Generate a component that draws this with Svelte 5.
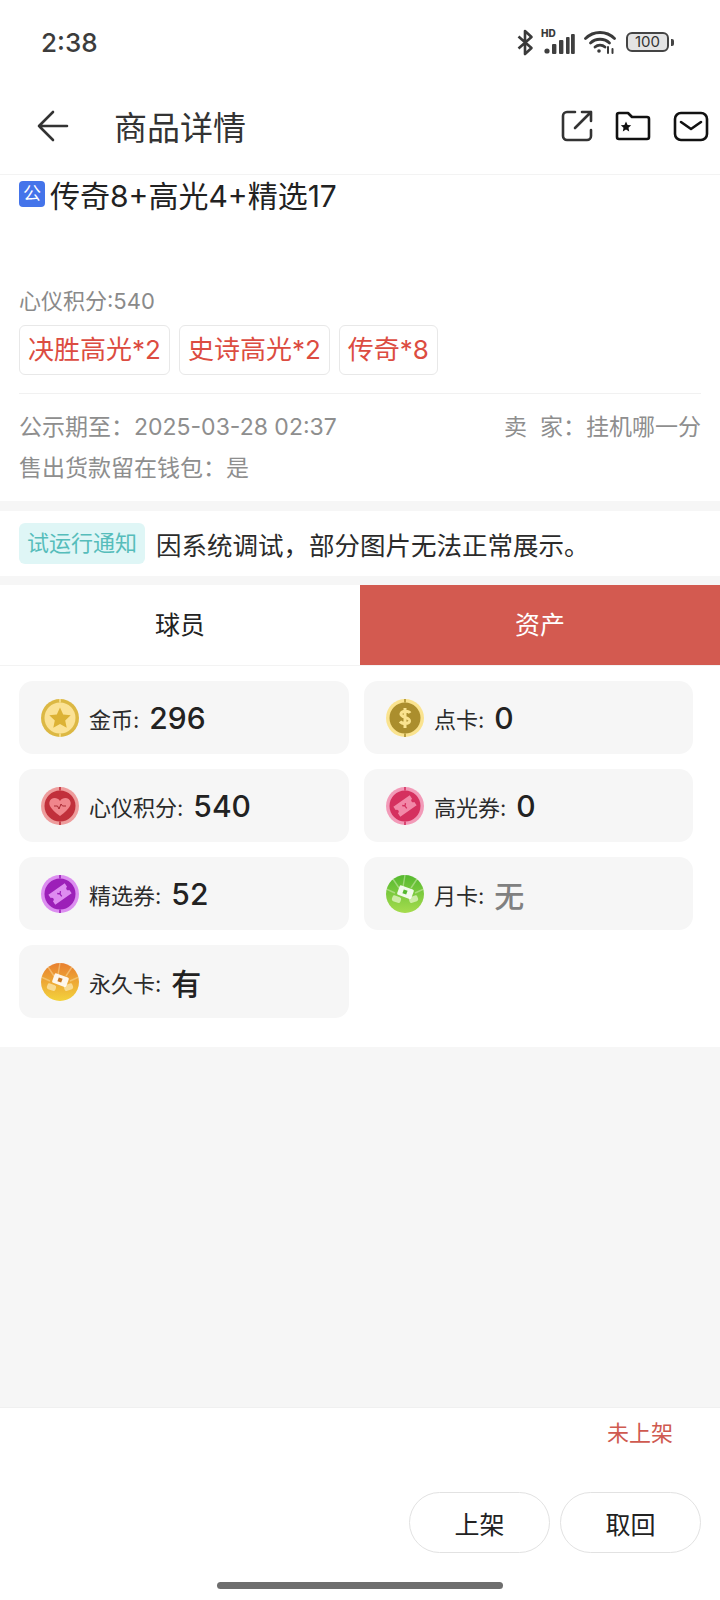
<script lang="ts">
  const tags = ['决胜高光*2', '史诗高光*2', '传奇*8'];

  const assets = [
    { kind: 'gold', label: '金币', value: '296' },
    { kind: 'point', label: '点卡', value: '0' },
    { kind: 'heart', label: '心仪积分', value: '540' },
    { kind: 'highlight', label: '高光券', value: '0' },
    { kind: 'select', label: '精选券', value: '52' },
    { kind: 'month', label: '月卡', value: '无', muted: true },
    { kind: 'forever', label: '永久卡', value: '有' }
  ];

  const rings = {
    gold: { outer: '#dcb843', inner: '#fbe295', tick: '#fbe295' },
    point: { outer: '#fae38f', inner: '#ab8e2d', tick: '#ab8e2d' },
    heart: { outer: '#ee9c9c', inner: '#c1303b', tick: '#c1303b' },
    highlight: { outer: '#f29ab8', inner: '#d5305f', tick: '#d5305f' },
    select: { outer: '#dc8df0', inner: '#9c1fb8', tick: '#9c1fb8' }
  };
</script>

{#snippet ticket(fill: string, dark: string)}
  <g transform="rotate(-35 19 19)">
    <path d="M9 13h20v4a2 2 0 0 0 0 4v4H9v-4a2 2 0 0 0 0-4z" fill={fill} />
    <path d="M17 17l2 2 2-2M19 19v3" fill="none" stroke={dark} stroke-width="1.3" />
  </g>
{/snippet}

{#snippet cards(id: string, top: string, bottom: string, light: string, dark: string)}
  <defs>
    <linearGradient id={id} x1="0" y1="0" x2="0" y2="1">
      <stop offset="0" stop-color={top} />
      <stop offset="1" stop-color={bottom} />
    </linearGradient>
  </defs>
  <circle cx="19" cy="19" r="19" fill="url(#{id})" />
  <g fill="none" stroke={light} stroke-opacity=".45" stroke-width="1.4">
    <path d="M19 0l-2 12M7 4l6 9M31 4l-6 9M0 14l9 4M38 14l-9 4" />
  </g>
  <g fill={light} fill-opacity=".75">
    <rect x="6" y="21" width="9" height="6" rx="2" transform="rotate(20 10 24)" />
    <rect x="23" y="21" width="9" height="6" rx="2" transform="rotate(-20 28 24)" />
  </g>
  <rect x="12" y="12" width="15" height="10" rx="1.5" transform="rotate(20 19 17)" fill="#fff" fill-opacity=".9" />
  <rect x="17" y="15" width="4" height="4" transform="rotate(20 19 17)" fill={dark} />
{/snippet}

<div class="page">
  <div class="status">
    <span class="time">2:38</span>
    <div class="status-icons">
      <svg class="bt" width="17" height="27" viewBox="0 0 17 27" fill="none" stroke="#3a3a3a" stroke-width="2.6">
        <path d="M1.5 7.5l13 11.5-6.5 6V2l6.5 6-13 11.5" stroke-linejoin="round" />
      </svg>
      <div class="signal">
        <span class="hd">HD</span>
        <svg width="31" height="20" viewBox="0 0 31 20" fill="#3f3f3f">
          <circle cx="3" cy="17" r="2.6" />
          <rect x="8" y="10" width="4.4" height="10" rx="1" />
          <rect x="15" y="6" width="4.4" height="14" rx="1" />
          <rect x="22" y="3" width="3.6" height="17" rx="1" />
          <rect x="27" y="0" width="3.8" height="20" rx="1" />
        </svg>
      </div>
      <svg class="wifi" width="32" height="24" viewBox="0 0 32 24" fill="none" stroke="#3a3a3a" stroke-width="2.8" stroke-linecap="round">
        <path d="M1.5 8.5C9.5 .5 22.5 .5 30.5 8.5" />
        <path d="M6.5 13C11.5 8 20.5 8 25.5 13" />
        <path d="M11 17c2.8-2.6 7.2-2.6 10 0" />
        <circle cx="15" cy="21" r="1.8" fill="#3a3a3a" stroke="none" />
        <path d="M24 17v6M28.5 19v4" stroke-width="2" />
      </svg>
      <div class="battery">
        <div class="cell">100</div>
        <div class="nub"></div>
      </div>
    </div>
  </div>

  <header class="bar">
    <svg class="back" width="32" height="32" viewBox="0 0 32 32" fill="none" stroke="#333" stroke-width="2.6" stroke-linecap="round" stroke-linejoin="round">
      <path d="M16 2L2 16l14 14M2 16h28" />
    </svg>
    <h1>商品详情</h1>
    <div class="actions">
      <svg width="32" height="32" viewBox="0 0 32 32" fill="none" stroke="#333" stroke-width="2.6" stroke-linecap="round" stroke-linejoin="round">
        <path d="M30 20v6a4 4 0 0 1-4 4H6a4 4 0 0 1-4-4V6a4 4 0 0 1 4-4h8" />
        <path d="M21 2h9v9M30 2L14 18" />
      </svg>
      <svg class="folder" width="36" height="30" viewBox="0 0 36 30" fill="none" stroke="#111" stroke-width="2.6" stroke-linejoin="round">
        <path d="M2 4a2 2 0 0 1 2-2h9l4 4h15a2 2 0 0 1 2 2v18a2 2 0 0 1-2 2H4a2 2 0 0 1-2-2z" />
        <path d="M11 10.5l1.6 3.4 3.6.4-2.7 2.5.7 3.6-3.2-1.8-3.2 1.8.7-3.6-2.7-2.5 3.6-.4z" fill="#111" stroke="none" />
      </svg>
      <svg class="mail" width="36" height="31" viewBox="0 0 36 31" fill="none" stroke="#111" stroke-width="2.6" stroke-linecap="round" stroke-linejoin="round">
        <rect x="2" y="2" width="32" height="27" rx="6" />
        <path d="M8 11l10 7 10-7" />
      </svg>
    </div>
  </header>

  <section class="info">
    <div class="title">
      <span class="badge">公</span>
      <span>传奇8+高光4+精选17</span>
    </div>
    <div class="score">心仪积分:540</div>
    <div class="tags">
      {#each tags as tag}
        <span class="tag">{tag}</span>
      {/each}
    </div>
    <div class="meta">
      <div class="meta-row">
        <span>公示期至：2025-03-28 02:37</span>
        <span>卖&nbsp;&nbsp;家：挂机哪一分</span>
      </div>
      <div class="meta-row">
        <span>售出货款留在钱包：是</span>
      </div>
    </div>
  </section>

  <section class="notice">
    <span class="notice-tag">试运行通知</span>
    <span class="notice-text">因系统调试，部分图片无法正常展示。</span>
  </section>

  <nav class="tabs">
    <div class="tab">球员</div>
    <div class="tab active">资产</div>
  </nav>

  <section class="assets">
    {#each assets as item}
      <div class="card">
        <svg class="coin" width="38" height="38" viewBox="0 0 38 38">
          {#if rings[item.kind]}
            <circle cx="19" cy="19" r="19" fill={rings[item.kind].outer} />
            <circle cx="19" cy="19" r="15.5" fill={rings[item.kind].inner} />
            <path d="M19 0v3.5M19 34.5V38" stroke={rings[item.kind].tick} stroke-width="1.6" />
          {/if}
          {#if item.kind === 'gold'}
            <path d="M19 8.5l3.2 6.9 7.5.9-5.5 5.1 1.5 7.4-6.7-3.7-6.7 3.7 1.5-7.4-5.5-5.1 7.5-.9z" fill="#dcb235" />
          {:else if item.kind === 'point'}
            <path d="M24 14c-1-2-8-3-9 .6-1 4.200 9 3.200 8.500 7.400-.5 3.500-7.500 3-9.500.5M19 9v20" fill="none" stroke="#fae38f" stroke-width="3" />
          {:else if item.kind === 'heart'}
            <path d="M19 29C8 21 8 17 8.500 15c1-4.500 7.500-5.500 10.500-1 3-4.500 9.500-3.500 10.500 1C30 17 30 21 19 29z" fill="#f0868c" />
            <path d="M13 19h3.500l1.500 3 2-5 1.500 2h3.500" fill="none" stroke="#a82a33" stroke-width="1" />
          {:else if item.kind === 'highlight'}
            {@render ticket('#f288a8', '#d5305f')}
          {:else if item.kind === 'select'}
            {@render ticket('#de8cf0', '#9c1fb8')}
          {:else if item.kind === 'month'}
            {@render cards('monthFill', '#55b92f', '#a6dc4e', '#e4f5c8', '#55b92f')}
          {:else if item.kind === 'forever'}
            {@render cards('foreverFill', '#e87f2f', '#f3d23c', '#fbe7b0', '#c9771f')}
          {/if}
        </svg>
        <span class="label">{item.label}:</span>
        <span class="value" class:muted={item.muted}>{item.value}</span>
      </div>
    {/each}
  </section>

  <div class="filler"></div>

  <footer class="foot">
    <div class="shelf">未上架</div>
    <div class="buttons">
      <button>上架</button>
      <button>取回</button>
    </div>
    <div class="home"></div>
  </footer>
</div>

<style>
  :global(body) {
    margin: 0;
    background: #fff;
  }

  .page {
    width: 720px;
    height: 1600px;
    display: flex;
    flex-direction: column;
    font-family: Inter, "Noto Sans CJK SC", sans-serif;
    color: #222;
    background: #fff;
    overflow: hidden;
  }

  .status {
    height: 84px;
    box-sizing: border-box;
    padding: 0 46px 0 41px;
    display: flex;
    align-items: center;
    justify-content: space-between;
  }

  .time {
    font-size: 26px;
    font-weight: 500;
    color: #3c3c3c;
  }

  .status-icons {
    display: flex;
    align-items: center;
  }

  .bt {
    margin-right: 8px;
  }

  .signal {
    position: relative;
    width: 33px;
    height: 24px;
    display: flex;
    align-items: flex-end;
    justify-content: flex-end;
    margin-right: 9px;
  }

  .hd {
    position: absolute;
    left: -1px;
    top: -3px;
    font-size: 10px;
    font-weight: 800;
    color: #3a3a3a;
    line-height: 12px;
  }

  .wifi {
    margin-right: 10px;
  }

  .battery {
    display: flex;
    align-items: center;
    gap: 2px;
  }

  .cell {
    width: 43px;
    height: 20px;
    box-sizing: border-box;
    border: 2px solid #444;
    border-radius: 6px;
    background: #e4e4e4;
    font-size: 15px;
    line-height: 16px;
    text-align: center;
    color: #333;
  }

  .nub {
    width: 3px;
    height: 7px;
    border-radius: 0 2px 2px 0;
    background: #444;
  }

  .bar {
    height: 91px;
    box-sizing: border-box;
    padding: 0 11px 6px 37px;
    display: flex;
    align-items: center;
    border-bottom: 1px solid #f3f3f3;
  }

  .back {
    flex: none;
  }

  h1 {
    margin: 0 0 0 45px;
    font-size: 33px;
    font-weight: 400;
    color: #333;
  }

  .actions {
    margin-left: auto;
    display: flex;
    align-items: center;
    gap: 22px;
  }

  .info {
    padding: 0 19px 12px;
  }

  .title {
    height: 105px;
    display: flex;
    align-items: flex-start;
    gap: 5px;
    font-size: 30px;
    line-height: 42px;
    color: #222;
  }

  .badge {
    width: 26px;
    height: 26px;
    margin-top: 6px;
    border-radius: 4px;
    background: #4474ea;
    color: #fff;
    font-size: 18px;
    line-height: 26px;
    text-align: center;
  }

  .score {
    font-size: 22px;
    line-height: 34px;
    margin-top: 4px;
    color: #8a8a8a;
  }

  .tags {
    display: flex;
    gap: 9px;
    margin-top: 7px;
    padding-bottom: 18px;
    border-bottom: 1px solid #f1f1f1;
  }

  .tag {
    height: 50px;
    box-sizing: border-box;
    padding: 0 8px;
    border: 1px solid #e8e8e8;
    border-radius: 6px;
    font-size: 26px;
    line-height: 48px;
    color: #dc4c41;
  }

  .meta {
    padding-top: 13px;
    font-size: 23px;
    line-height: 41px;
    color: #8e8e8e;
  }

  .meta-row {
    display: flex;
    justify-content: space-between;
  }

  .notice {
    margin-top: 0;
    border-top: 10px solid #f6f6f6;
    border-bottom: 9px solid #f6f6f6;
    height: 65px;
    display: flex;
    align-items: center;
    gap: 11px;
    padding: 0 19px;
  }

  .notice-tag {
    height: 41px;
    padding: 0 8px;
    border-radius: 6px;
    background: #dff6f6;
    color: #56bdbb;
    font-size: 22px;
    line-height: 41px;
  }

  .notice-text {
    font-size: 25.500px;
    color: #2b2b2b;
  }

  .tabs {
    display: flex;
    height: 80px;
    border-bottom: 1px solid #f3f3f3;
  }

  .tab {
    flex: 1;
    text-align: center;
    font-size: 25px;
    line-height: 80px;
    color: #222;
  }

  .tab.active {
    background: #d35a50;
    color: #fff;
  }

  .assets {
    display: grid;
    grid-template-columns: 330px 329px;
    grid-auto-rows: 73px;
    gap: 15px;
    padding: 15px 0 29px 19px;
  }

  .card {
    display: flex;
    align-items: center;
    padding-left: 22px;
    border-radius: 14px;
    background: #f6f6f6;
  }

  .coin {
    flex: none;
    margin-right: 10px;
  }

  .label {
    font-size: 22px;
    color: #2b2b2b;
  }

  .value {
    margin-left: 10px;
    font-size: 30px;
    font-weight: 500;
    color: #222;
  }

  .value.muted {
    color: #808080;
  }

  .filler {
    flex: 1;
    background: #f6f6f6;
  }

  .foot {
    height: 193px;
    box-sizing: border-box;
    border-top: 1px solid #f0f0f0;
    display: flex;
    flex-direction: column;
  }

  .shelf {
    margin-top: 9px;
    padding-right: 47px;
    text-align: right;
    font-size: 22px;
    line-height: 32px;
    color: #cf5a50;
  }

  .buttons {
    display: flex;
    justify-content: flex-end;
    gap: 10px;
    margin-top: 43px;
    padding-right: 19px;
  }

  button {
    width: 141px;
    height: 61px;
    border: 1px solid #e2e2e2;
    border-radius: 31px;
    background: #fff;
    font: inherit;
    font-size: 25px;
    color: #222;
  }

  .home {
    width: 286px;
    height: 7px;
    margin: 29px auto 0;
    border-radius: 4px;
    background: #6e6e6e;
  }
</style>
